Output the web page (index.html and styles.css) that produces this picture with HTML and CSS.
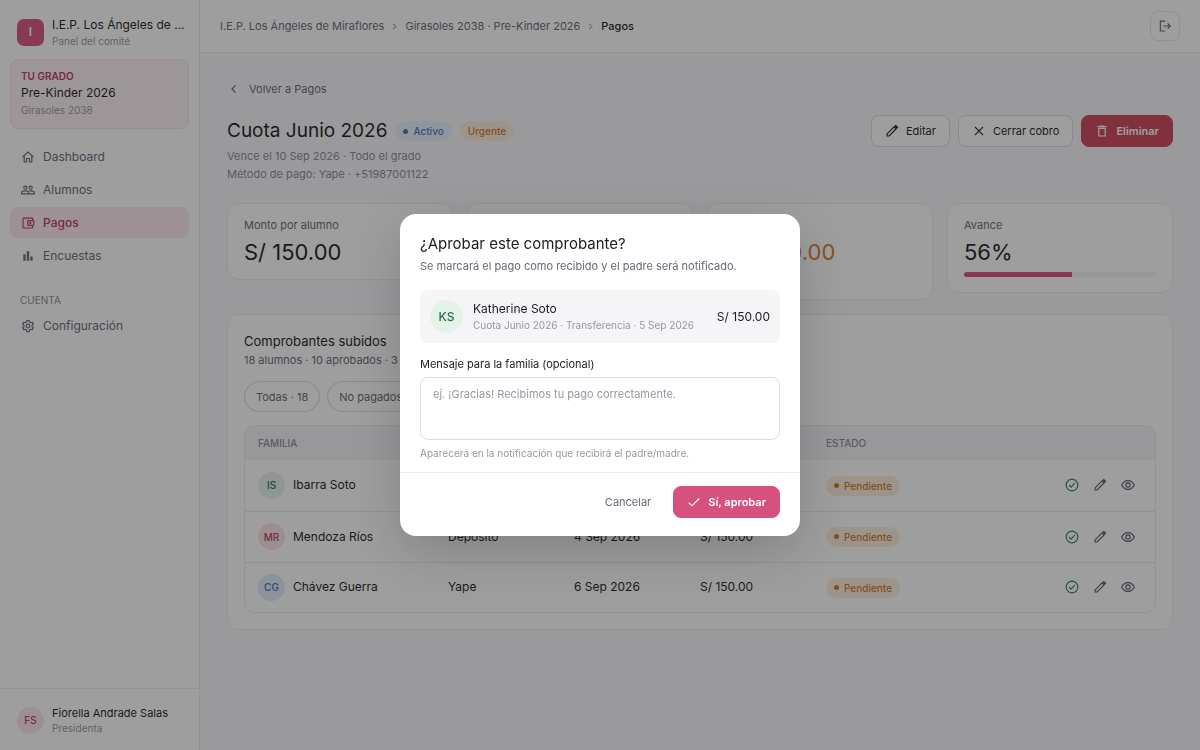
FILE: index.html
```html
<!DOCTYPE html>
<html lang="es">
<head>
  <meta charset="UTF-8" />
  <meta name="viewport" content="width=device-width, initial-scale=1.0"/>
  <title>Cuota Junio 2026 - Pagos</title>
  <link rel="stylesheet" href="styles.css">
</head>
<body>

  <!-- Shared icons -->
  <svg class="sprite" aria-hidden="true">
    <symbol id="i-home" viewBox="0 0 24 24"><path d="M2.500 12 12 3.500l9.500 8.500M5.500 10v10.500h4v-6h5v6h4V10"/></symbol>
    <symbol id="i-people" viewBox="0 0 24 24"><circle cx="7.500" cy="8" r="2.700"/><circle cx="16.500" cy="8" r="2.700"/><path d="M1 18.500v-2c0-1.800 3-3 6.500-3s5.500 1.200 5.500 3v2zM14 13.700c4-.8 9 .6 9 2.800v2H13"/></symbol>
    <symbol id="i-wallet" viewBox="0 0 24 24"><path d="M20 8V4.500a1 1 0 0 0-1-1H4.500a1 1 0 0 0-1 1v15a1 1 0 0 0 1 1H19a1 1 0 0 0 1-1V16"/><rect x="11.500" y="8" width="10.500" height="8" rx="1"/><circle cx="16" cy="12" r="1"/></symbol>
    <symbol id="i-bars" viewBox="0 0 24 24"><path fill="currentColor" stroke="none" d="M4 9h4v11H4zM10 4h4v16h-4zM16 13h4v7h-4z"/></symbol>
    <symbol id="i-gear" viewBox="0 0 24 24"><path d="m10 2.500-.5 2.800-2 1.100-2.700-1-2 3.500 2.200 1.800v2.600l-2.200 1.800 2 3.500 2.700-1 2 1.100.5 2.800h4l.5-2.800 2-1.100 2.700 1 2-3.500-2.200-1.800v-2.600l2.200-1.800-2-3.500-2.700 1-2-1.100-.5-2.800z"/><circle cx="12" cy="12" r="3.200"/></symbol>
    <symbol id="i-left" viewBox="0 0 24 24"><path d="m14.500 6-6 6 6 6"/></symbol>
    <symbol id="i-right" viewBox="0 0 24 24"><path d="m9 6 6 6-6 6"/></symbol>
    <symbol id="i-logout" viewBox="0 0 24 24"><path d="M12.500 3.500H4v17h8.500M9 12h12M16.500 7.500 21 12l-4.500 4.500"/></symbol>
    <symbol id="i-pencil" viewBox="0 0 24 24"><path d="M3.500 20.500V17L15.500 5 19 8.500l-12 12z"/><path fill="currentColor" d="m17 4 1.500-1.500L21.500 5.500 20 7z"/></symbol>
    <symbol id="i-x" viewBox="0 0 24 24"><path d="M5 5l14 14M19 5 5 19"/></symbol>
    <symbol id="i-trash" viewBox="0 0 24 24"><path d="M6.500 7v13.500h11V7M4 4.500h16M9 3.500h6M6.500 7.500h11"/></symbol>
    <symbol id="i-check" viewBox="0 0 24 24"><path d="m3 13 5.500 5.500L21 6"/></symbol>
    <symbol id="i-ok" viewBox="0 0 24 24"><circle cx="12" cy="12" r="10"/><path d="m7 12 3.500 3.500 6.500-7"/></symbol>
    <symbol id="i-eye" viewBox="0 0 24 24"><path d="M1.200 12C3.500 7.200 7.500 4.500 12 4.500s8.500 2.700 10.800 7.500c-2.300 4.800-6.300 7.500-10.800 7.500S3.500 16.800 1.200 12z"/><circle cx="12" cy="12" r="3.700"/></symbol>
  </svg>

  <div class="app">
    <aside class="sidebar">
      <div class="brand">
        <span class="logo">I</span>
        <div>
          <div class="brand-name">I.E.P. Los Ángeles de ...</div>
          <div class="muted-small">Panel del comité</div>
        </div>
      </div>

      <div class="grade">
        <div class="grade-label">TU GRADO</div>
        <div class="grade-name">Pre-Kinder 2026</div>
        <div class="muted-small">Girasoles 2038</div>
      </div>

      <nav class="nav">
        <a href="#"><svg class="icon"><use href="#i-home"/></svg>Dashboard</a>
        <a href="#"><svg class="icon"><use href="#i-people"/></svg>Alumnos</a>
        <a href="#" class="active"><svg class="icon"><use href="#i-wallet"/></svg>Pagos</a>
        <a href="#"><svg class="icon"><use href="#i-bars"/></svg>Encuestas</a>
        <div class="nav-label">CUENTA</div>
        <a href="#"><svg class="icon"><use href="#i-gear"/></svg>Configuración</a>
      </nav>

      <div class="user">
        <span class="avatar pink">FS</span>
        <div>
          <div class="user-name">Fiorella Andrade Salas</div>
          <div class="muted-small">Presidenta</div>
        </div>
      </div>
    </aside>

    <div class="main">
      <header class="topbar">
        <nav class="crumbs">
          <a href="#">I.E.P. Los Ángeles de Miraflores</a>
          <svg class="icon"><use href="#i-right"/></svg>
          <a href="#">Girasoles 2038 · Pre-Kinder 2026</a>
          <svg class="icon"><use href="#i-right"/></svg>
          <span>Pagos</span>
        </nav>
        <button class="logout" type="button" aria-label="Salir"><svg class="icon"><use href="#i-logout"/></svg></button>
      </header>

      <main class="content">
        <a href="#" class="back"><svg class="icon"><use href="#i-left"/></svg>Volver a Pagos</a>

        <div class="page-head">
          <div>
            <div class="title-row">
              <h1>Cuota Junio 2026</h1>
              <span class="badge blue dot">Activo</span>
              <span class="badge orange">Urgente</span>
            </div>
            <p class="meta">Vence el 10 Sep 2026 · Todo el grado</p>
            <p class="meta">Método de pago: Yape · +51987001122</p>
          </div>
          <div class="actions">
            <button class="btn" type="button"><svg class="icon"><use href="#i-pencil"/></svg>Editar</button>
            <button class="btn" type="button"><svg class="icon"><use href="#i-x"/></svg>Cerrar cobro</button>
            <button class="btn danger" type="button"><svg class="icon"><use href="#i-trash"/></svg>Eliminar</button>
          </div>
        </div>

        <div class="stats">
          <div class="stat">
            <div class="stat-label">Monto por alumno</div>
            <div class="stat-value">S/ 150.00</div>
          </div>
          <div class="stat">
            <div class="stat-label">Recaudado</div>
            <div class="stat-value green-text">S/ 1500.00</div>
            <div class="stat-note">10 de 18</div>
          </div>
          <div class="stat">
            <div class="stat-label">Pendiente</div>
            <div class="stat-value orange-text">S/ 1200.00</div>
            <div class="stat-note">8 alumnos</div>
          </div>
          <div class="stat">
            <div class="stat-label">Avance</div>
            <div class="stat-value">56%</div>
            <div class="progress"><div class="progress-fill" style="width: 56%"></div></div>
          </div>
        </div>

        <section class="panel">
          <h2>Comprobantes subidos</h2>
          <p class="panel-sub">18 alumnos · 10 aprobados · 3 pendientes</p>
          <div class="chips">
            <button class="chip" type="button">Todas · 18</button>
            <button class="chip" type="button">No pagados · 5</button>
          </div>

          <div class="table-wrap">
            <table>
              <thead>
                <tr>
                  <th class="col-family">FAMILIA</th>
                  <th class="col">MÉTODO</th>
                  <th class="col">FECHA</th>
                  <th class="col">MONTO</th>
                  <th>ESTADO</th>
                  <th></th>
                </tr>
              </thead>
              <tbody>
                <tr>
                  <td><div class="family"><span class="avatar green">IS</span>Ibarra Soto</div></td>
                  <td>Transferencia</td>
                  <td>5 Sep 2026</td>
                  <td>S/ 150.00</td>
                  <td><span class="badge orange dot">Pendiente</span></td>
                  <td>
                    <div class="row-actions">
                      <button type="button" class="ok" aria-label="Aprobar"><svg class="icon"><use href="#i-ok"/></svg></button>
                      <button type="button" aria-label="Editar"><svg class="icon"><use href="#i-pencil"/></svg></button>
                      <button type="button" aria-label="Ver"><svg class="icon"><use href="#i-eye"/></svg></button>
                    </div>
                  </td>
                </tr>
                <tr>
                  <td><div class="family"><span class="avatar rose">MR</span>Mendoza Ríos</div></td>
                  <td>Depósito</td>
                  <td>4 Sep 2026</td>
                  <td>S/ 150.00</td>
                  <td><span class="badge orange dot">Pendiente</span></td>
                  <td>
                    <div class="row-actions">
                      <button type="button" class="ok" aria-label="Aprobar"><svg class="icon"><use href="#i-ok"/></svg></button>
                      <button type="button" aria-label="Editar"><svg class="icon"><use href="#i-pencil"/></svg></button>
                      <button type="button" aria-label="Ver"><svg class="icon"><use href="#i-eye"/></svg></button>
                    </div>
                  </td>
                </tr>
                <tr>
                  <td><div class="family"><span class="avatar blue">CG</span>Chávez Guerra</div></td>
                  <td>Yape</td>
                  <td>6 Sep 2026</td>
                  <td>S/ 150.00</td>
                  <td><span class="badge orange dot">Pendiente</span></td>
                  <td>
                    <div class="row-actions">
                      <button type="button" class="ok" aria-label="Aprobar"><svg class="icon"><use href="#i-ok"/></svg></button>
                      <button type="button" aria-label="Editar"><svg class="icon"><use href="#i-pencil"/></svg></button>
                      <button type="button" aria-label="Ver"><svg class="icon"><use href="#i-eye"/></svg></button>
                    </div>
                  </td>
                </tr>
              </tbody>
            </table>
          </div>
        </section>
      </main>
    </div>
  </div>

  <!-- Approve dialog -->
  <div class="overlay">
    <form class="modal" role="dialog" aria-modal="true" aria-labelledby="modalTitle">
      <div class="modal-body">
        <h3 id="modalTitle">¿Aprobar este comprobante?</h3>
        <p class="modal-text">Se marcará el pago como recibido y el padre será notificado.</p>

        <div class="receipt">
          <span class="avatar large green">KS</span>
          <div class="receipt-info">
            <div class="receipt-name">Katherine Soto</div>
            <div class="receipt-sub">Cuota Junio 2026 · Transferencia · 5 Sep 2026</div>
          </div>
          <div class="receipt-amount">S/ 150.00</div>
        </div>

        <label for="message">Mensaje para la familia (opcional)</label>
        <textarea id="message" name="message" placeholder="ej. ¡Gracias! Recibimos tu pago correctamente."></textarea>
        <div class="hint">Aparecerá en la notificación que recibirá el padre/madre.</div>
      </div>
      <div class="modal-footer">
        <button class="btn ghost" type="button">Cancelar</button>
        <button class="btn primary" type="submit"><svg class="icon"><use href="#i-check"/></svg>Sí, aprobar</button>
      </div>
    </form>
  </div>

</body>
</html>
```
FILE: styles.css
```css
/* Base & Layout */
* {
  box-sizing: border-box;
}
body {
  margin: 0;
  font-family: Inter, 'Open Sans', sans-serif;
  font-size: 12px;
  line-height: 18px;
  background: #f8f8fa;
  color: #1c1a22;
}
h1, h2, h3, p {
  margin: 0;
  font-weight: 400;
}
a {
  color: inherit;
  text-decoration: none;
}
button, textarea {
  font: inherit;
  color: inherit;
}
button {
  cursor: pointer;
}
.sprite {
  display: none;
}
.icon {
  width: 14px;
  height: 14px;
  flex: none;
  fill: none;
  stroke: currentColor;
  stroke-width: 2;
}
.app {
  display: flex;
  min-height: 100vh;
}

/* Sidebar */
.sidebar {
  width: 200px;
  flex: none;
  display: flex;
  flex-direction: column;
  background: #fff;
  border-right: 1px solid #ececf0;
}
.brand {
  display: flex;
  align-items: center;
  gap: 8px;
  padding: 16px 10px 11px 17px;
}
.brand-name {
  white-space: nowrap;
}
.logo {
  width: 27px;
  height: 27px;
  flex: none;
  display: flex;
  align-items: center;
  justify-content: center;
  border-radius: 7px;
  background: #d9537f;
  color: #fff;
  font-weight: 600;
}
.muted-small {
  font-size: 10px;
  line-height: 14px;
  color: #9a95a2;
}
.grade {
  margin: 0 10px;
  padding: 9px 10px 11px;
  border: 1px solid #fae0e9;
  border-radius: 8px;
  background: #fdf1f5;
}
.grade-label {
  font-size: 10px;
  line-height: 14px;
  font-weight: 600;
  color: #b83766;
}
.grade-name {
  line-height: 20px;
}
.nav {
  flex: 1;
  display: flex;
  flex-direction: column;
  gap: 2px;
  padding: 12px 10px;
}
.nav a {
  display: flex;
  align-items: center;
  gap: 8px;
  height: 31px;
  padding: 0 11px;
  border-radius: 8px;
  color: #6b6675;
}
.nav a.active {
  background: #fde8ef;
  color: #b83766;
  font-weight: 500;
}
.nav-label {
  margin-top: 20px;
  padding: 0 10px;
  font-size: 10px;
  line-height: 15px;
  color: #8d8896;
}
.user {
  display: flex;
  align-items: center;
  gap: 8px;
  padding: 16px 17px 15px;
  border-top: 1px solid #ececf0;
}
.user-name {
  font-size: 11px;
  line-height: 16px;
}

/* Avatars */
.avatar {
  width: 27px;
  height: 27px;
  flex: none;
  display: flex;
  align-items: center;
  justify-content: center;
  border-radius: 50%;
  font-size: 10px;
  font-weight: 500;
}
.avatar.large {
  width: 33px;
  height: 33px;
  font-size: 12px;
}
.avatar.pink {
  background: #fce6ed;
  color: #b83766;
}
.avatar.rose {
  background: #fbe2e7;
  color: #b8405a;
}
.avatar.green {
  background: #e5f2ea;
  color: #2a6e4c;
}
.avatar.blue {
  background: #e3ebf7;
  color: #3f68a8;
}

/* Top bar */
.main {
  flex: 1;
  min-width: 0;
}
.topbar {
  display: flex;
  align-items: center;
  justify-content: space-between;
  height: 53px;
  padding: 0 20px;
  background: #fff;
  border-bottom: 1px solid #ececf0;
}
.crumbs {
  display: flex;
  align-items: center;
  gap: 5px;
  font-size: 11px;
  color: #6b6675;
}
.crumbs .icon {
  width: 11px;
  height: 11px;
}
.crumbs span {
  color: #1c1a22;
  font-weight: 500;
}
.logout {
  width: 30px;
  height: 30px;
  padding: 0;
  display: flex;
  align-items: center;
  justify-content: center;
  border: 1px solid #e8e7ec;
  border-radius: 8px;
  background: #fff;
  color: #6b6675;
}

/* Page header */
.content {
  padding: 27px;
}
.back {
  display: inline-flex;
  align-items: center;
  gap: 8px;
  font-size: 11px;
  color: #6b6675;
}
.page-head {
  display: flex;
  justify-content: space-between;
  margin: 14px 0 20px;
}
.title-row {
  display: flex;
  align-items: center;
  gap: 8px;
  height: 32px;
}
h1 {
  font-size: 19px;
}
.meta {
  font-size: 11px;
  color: #8d8896;
}
.badge {
  display: inline-flex;
  align-items: center;
  gap: 5px;
  height: 20px;
  padding: 0 8px;
  border-radius: 10px;
  font-size: 10px;
  font-weight: 500;
}
.badge.dot::before {
  content: '';
  width: 5px;
  height: 5px;
  border-radius: 50%;
  background: currentColor;
}
.badge.blue {
  background: #e8f0fb;
  color: #4670b4;
}
.badge.orange {
  background: #fbeedd;
  color: #d0771f;
}
.actions {
  display: flex;
  align-items: flex-start;
  gap: 8px;
}

/* Buttons */
.btn {
  display: flex;
  align-items: center;
  gap: 7px;
  height: 32px;
  padding: 0 13px;
  border: 1px solid #dcdbe1;
  border-radius: 8px;
  background: #fff;
  font-size: 11px;
}
.btn.danger {
  border-color: #cd4358;
  background: #cd4358;
  color: #fff;
  font-weight: 600;
}
.btn.primary {
  border-color: #d6517f;
  background: #d6517f;
  color: #fff;
  font-weight: 600;
}
.btn.ghost {
  border-color: transparent;
  color: #6b6675;
}

/* Stats */
.stats {
  display: grid;
  grid-template-columns: repeat(4, 1fr);
  gap: 14px;
  align-items: start;
}
.stat {
  padding: 12px 16px 8px;
  border: 1px solid #ececf0;
  border-radius: 12px;
  background: #fff;
}
.stat-label {
  font-size: 11px;
  color: #6b6675;
}
.stat-value {
  font-size: 22px;
  line-height: 37px;
}
.stat-note {
  font-size: 11px;
  line-height: 20px;
  color: #8d8896;
}
.green-text {
  color: #2f8159;
}
.orange-text {
  color: #d97b1f;
}
.progress {
  height: 5px;
  margin: 1px 0 7px;
  border-radius: 3px;
  background: #f4f3f6;
  overflow: hidden;
}
.progress-fill {
  height: 100%;
  background: #dc4d80;
}

/* Table panel */
.panel {
  margin-top: 14px;
  padding: 17px 16px 16px;
  border: 1px solid #ececf0;
  border-radius: 12px;
  background: #fff;
}
h2 {
  font-size: 13px;
  line-height: 19px;
}
.panel-sub {
  font-size: 11px;
  color: #6b6675;
}
.chips {
  display: flex;
  gap: 7px;
  margin: 12px 0 13px;
}
.chip {
  height: 31px;
  padding: 0 11px;
  border: 1px solid #d8d7de;
  border-radius: 16px;
  background: #fff;
  font-size: 11px;
  color: #6b6675;
}
.table-wrap {
  border: 1px solid #ececf0;
  border-radius: 10px;
  overflow: hidden;
}
table {
  width: 100%;
  border-collapse: collapse;
}
th {
  height: 34px;
  padding: 0 13px;
  background: #f5f5f7;
  font-size: 10px;
  font-weight: 500;
  text-align: left;
  color: #8d8896;
}
td {
  height: 51px;
  padding: 0 13px;
  border-bottom: 1px solid #e9e8ed;
}
tbody tr:last-child td {
  height: 50px;
  border-bottom: 0;
}
.col-family {
  width: 190px;
}
.col {
  width: 126px;
}
.family {
  display: flex;
  align-items: center;
  gap: 8px;
}
.row-actions {
  display: flex;
  justify-content: flex-end;
}
.row-actions button {
  width: 28px;
  height: 28px;
  padding: 0;
  display: flex;
  align-items: center;
  justify-content: center;
  border: none;
  background: none;
  color: #5c5666;
}
.row-actions .ok {
  color: #2f8159;
}

/* Modal */
.overlay {
  position: fixed;
  inset: 0;
  display: flex;
  align-items: center;
  justify-content: center;
  background: rgba(24, 24, 27, 0.42);
}
.modal {
  width: 100%;
  max-width: 400px;
  border-radius: 16px;
  background: #fff;
  box-shadow: 0 16px 50px rgba(0, 0, 0, 0.18);
}
.modal-body {
  padding: 20px 20px 10px;
}
h3 {
  font-size: 15px;
  line-height: 20px;
}
.modal-text {
  margin: 3px 0 15px;
  font-size: 11px;
  color: #6b6675;
}
.receipt {
  display: flex;
  align-items: center;
  gap: 10px;
  padding: 10px;
  margin-bottom: 12px;
  border-radius: 8px;
  background: #f5f5f8;
}
.receipt-info {
  flex: 1;
}
.receipt-name {
  line-height: 17px;
}
.receipt-sub {
  font-size: 10px;
  line-height: 16px;
  color: #9a95a2;
}
.modal label {
  display: block;
  font-size: 11px;
}
textarea {
  display: block;
  width: 100%;
  height: 63px;
  margin: 4px 0;
  padding: 7px 12px;
  border: 1px solid #dcdbe1;
  border-radius: 8px;
  resize: none;
  outline: none;
}
textarea::placeholder {
  font-size: 11px;
  color: #9a95a2;
}
.hint {
  font-size: 10px;
  color: #9a95a2;
}
.modal-footer {
  display: flex;
  justify-content: flex-end;
  gap: 8px;
  padding: 13px 20px 18px;
  border-top: 1px solid #ececf0;
}
```
